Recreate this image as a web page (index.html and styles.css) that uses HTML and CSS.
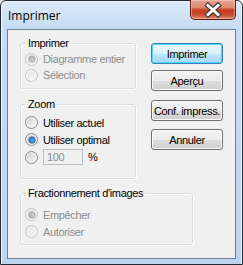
FILE: index.html
```html
<!DOCTYPE html>
<html>
<head>
<meta charset="utf-8">
<link rel="stylesheet" href="styles.css">
</head>
<body>
<div class="window">
  <div class="titlebar">
    <span class="title">Imprimer</span>
    <div class="close">
      <svg width="44" height="18" viewBox="0 0 44 18">
        <path d="M17 4.5 L27 13.5 M27 4.5 L17 13.5" stroke="#3b3b3b" stroke-width="5.2" stroke-linecap="square" fill="none"/>
        <path d="M17 4.5 L27 13.5 M27 4.5 L17 13.5" stroke="#ffffff" stroke-width="3" stroke-linecap="square" fill="none"/>
      </svg>
    </div>
  </div>
  <div class="client">
    <div class="top">
      <div class="leftcol">
        <div class="group g1">
          <span class="legend">Imprimer</span>
          <div class="row disabled"><span class="radio checked"></span>Diagramme entier</div>
          <div class="row disabled"><span class="radio"></span>Sélection</div>
        </div>
        <div class="group g2">
          <span class="legend">Zoom</span>
          <div class="row"><span class="radio"></span>Utiliser actuel</div>
          <div class="row"><span class="radio checked"></span>Utiliser optimal</div>
          <div class="row row3"><span class="radio"></span><span class="input">100</span><span class="pct">%</span></div>
        </div>
      </div>
      <div class="buttons">
        <div class="btn default b1">Imprimer</div>
        <div class="btn b2">Aperçu</div>
        <div class="btn b3">Conf. impress.</div>
        <div class="btn b4">Annuler</div>
      </div>
    </div>
    <div class="group g3">
      <span class="legend">Fractionnement d'images</span>
      <div class="row disabled"><span class="radio checked"></span>Empêcher</div>
      <div class="row disabled"><span class="radio"></span>Autoriser</div>
    </div>
  </div>
</div>
</body>
</html>
```
FILE: styles.css
```css
html, body {
  margin: 0;
  padding: 0;
  background: #ffffff;
}
.window {
  width: 243px;
  height: 265px;
  box-sizing: border-box;
  border: 1px solid #1f2a35;
  border-radius: 6px 6px 0 0;
  padding: 0 6px 5px 6px;
  background: linear-gradient(to bottom, #dae9f8 0px, #c6dcf3 28px, #bcd4ee 100%);
  box-shadow: inset 1px 1px 0 #eef5fc, inset -1px 0 0 #eef5fc;
  display: flex;
  flex-direction: column;
  font-family: "Liberation Sans", Arial, sans-serif;
  font-size: 11px;
  color: #000;
}
.titlebar {
  height: 28px;
  display: flex;
  align-items: flex-start;
  padding-left: 1px;
}
.title {
  font-family: "Open Sans", "Liberation Sans", sans-serif;
  font-size: 12px;
  line-height: 16px;
  margin-top: 7px;
  color: #000;
}
.close {
  margin-left: auto;
  margin-top: -1px;
  width: 46px;
  height: 20px;
  box-sizing: border-box;
  border: 1px solid #5e1d12;
  border-top: none;
  border-radius: 0 0 5px 5px;
  background: linear-gradient(to bottom, #e6a393 0%, #dc8772 40%, #c53e22 52%, #c9482b 75%, #e0876b 100%);
  box-shadow: inset 0 0 0 1px rgba(255, 220, 210, 0.45);
  display: flex;
  align-items: center;
  justify-content: center;
}
.close svg {
  display: block;
}
.client {
  flex: 1;
  border: 1px solid #6d8196;
  background: #f0f0f0;
  padding: 13px 0 0 12px;
}
.top {
  display: flex;
  align-items: flex-start;
}
.leftcol {
  width: 116px;
  display: flex;
  flex-direction: column;
}
.group {
  position: relative;
  box-sizing: border-box;
  border: 1px solid #d5dfe5;
  border-radius: 3px;
  padding-left: 4px;
  box-shadow: 1px 1px 0 #ffffff inset, 1px 1px 0 #ffffff;
}
.legend {
  position: absolute;
  left: 5px;
  top: -7px;
  line-height: 13px;
  padding: 0 2px;
  background: #f0f0f0;
  letter-spacing: -0.35px;
}
.g1 {
  height: 46px;
  padding-top: 7px;
}
.g1 .row {
  height: 16px;
}
.g2 {
  height: 75px;
  margin-top: 15px;
  padding-top: 9px;
}
.g3 {
  width: 173px;
  height: 52px;
  margin-top: 14px;
  padding-top: 12px;
}
.row {
  height: 17px;
  display: flex;
  align-items: center;
  letter-spacing: -0.35px;
  white-space: nowrap;
}
.row3 {
  height: 18px;
}
.disabled {
  color: #8d8d8d;
}
.radio {
  width: 13px;
  height: 13px;
  box-sizing: border-box;
  border-radius: 50%;
  border: 1px solid #8a8a8a;
  background: linear-gradient(135deg, #c9c9c9 0%, #e4e4e4 45%, #fbfbfb 100%);
  margin-right: 5px;
  flex: none;
  position: relative;
  box-shadow: inset 0 0 0 1px #f4f4f4;
}
.radio.checked::after {
  content: "";
  position: absolute;
  left: 2.5px;
  top: 2.5px;
  width: 6px;
  height: 6px;
  border-radius: 50%;
  background: radial-gradient(circle at 55% 55%, #5fc3f7 0%, #1e7fcf 45%, #0f3c7a 100%);
  box-shadow: 0 0 0 0.5px #123a6a;
}
.disabled .radio {
  border-color: #c4c4c4;
  background: linear-gradient(135deg, #e2e2e2 0%, #eeeeee 50%, #f9f9f9 100%);
  box-shadow: inset 0 0 0 1px #f6f6f6;
}
.disabled .radio.checked::after {
  background: radial-gradient(circle at 55% 55%, #d8d8d8 0%, #b4b4b4 50%, #8e8e8e 100%);
  box-shadow: 0 0 0 0.5px #9a9a9a;
}
.input {
  width: 40px;
  height: 16px;
  box-sizing: border-box;
  border: 1px solid #b9bdc3;
  background: #f0f0f0;
  color: #8d8d8d;
  line-height: 14px;
  padding-left: 3px;
  margin-right: 5px;
}
.pct {
  letter-spacing: 0;
}
.buttons {
  margin-left: 15px;
  display: flex;
  flex-direction: column;
}
.btn {
  width: 72px;
  height: 21px;
  box-sizing: border-box;
  border: 1px solid #707070;
  border-radius: 3px;
  background: linear-gradient(to bottom, #f3f3f3 0%, #ebebeb 50%, #dddddd 51%, #cfcfcf 100%);
  box-shadow: inset 0 0 0 1px #fbfbfb;
  display: flex;
  align-items: center;
  justify-content: center;
  letter-spacing: -0.35px;
  white-space: nowrap;
}
.btn.default {
  border-color: #3c7fb1;
  background: linear-gradient(to bottom, #eaf6fd 0%, #d9f0fc 50%, #bee6fd 51%, #a7d9f5 100%);
  box-shadow: inset 0 0 0 1px #48d8fb;
}
.b2 {
  margin-top: 6px;
}
.b3 {
  margin-top: 9px;
}
.b4 {
  margin-top: 8px;
}
```
